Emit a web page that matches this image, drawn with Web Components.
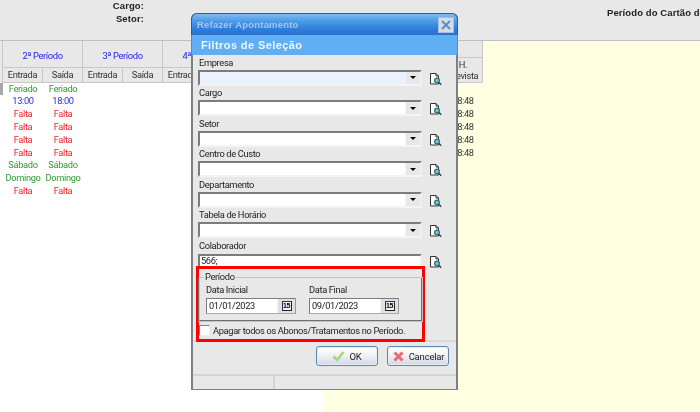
<!DOCTYPE html>
<html lang="pt-BR">
<head>
<meta charset="utf-8">
<title>Refazer Apontamento</title>
<style>
    html, body { margin: 0; height: 100%; overflow: hidden; }
    body { font: 9.3px Roboto, "Liberation Sans", Arial, sans-serif; letter-spacing: -.35px; color: #222; }
</style>
</head>
<body>
<ponto-page>
    <time-sheet></time-sheet>
    <filter-dialog slot="dialog" title-text="Refazer Apontamento" band="Filtros de Seleção">
        <filter-field label="Empresa" focused></filter-field>
        <filter-field label="Cargo"></filter-field>
        <filter-field label="Setor"></filter-field>
        <filter-field label="Centro de Custo"></filter-field>
        <filter-field label="Departamento"></filter-field>
        <filter-field label="Tabela de Horário"></filter-field>
        <filter-field label="Colaborador" value="566;" plain></filter-field>
        <period-box slot="period">
            <date-field label="Data Inicial" value="01/01/2023"></date-field>
            <date-field label="Data Final" value="09/01/2023"></date-field>
        </period-box>
        <dialog-button slot="actions" icon="ok">OK</dialog-button>
        <dialog-button slot="actions" icon="cancel">Cancelar</dialog-button>
    </filter-dialog>
</ponto-page>

<script>
    ((w, d) => {
        // Small base class: every element just stamps its markup in an open shadow root
        class ShadowElement extends HTMLElement {
            constructor() {
                super();
                this.attachShadow({mode: 'open'});
            }

            connectedCallback() {
                this.shadowRoot.innerHTML = this.render();
            }

            attr(name, fallback = '') {
                return this.hasAttribute(name) ? this.getAttribute(name) : fallback;
            }
        }

        // Page background: grey top band with the two info blocks, sheet below, dialog on top
        class PontoPage extends ShadowElement {
            render() {
                return `
                <style>
                    :host { display: block; position: relative; width: 700px; height: 412px; overflow: hidden; background: #e8e8e8; filter: blur(.3px); }
                    .top { height: 41px; display: flex; justify-content: space-between; font: bold 9.5px "Liberation Sans", Arial, sans-serif; letter-spacing: .1px; color: #222; box-sizing: border-box; border-bottom: 1px solid #c0c0c0; }
                    .who { width: 144px; display: grid; grid-auto-rows: 13px; text-align: right; align-content: start; }
                    .range { width: 93px; padding-top: 6px; line-height: 13px; white-space: nowrap; overflow: hidden; }
                </style>
                <div class="top">
                    <div class="who"><span>Cargo:</span><span>Setor:</span></div>
                    <div class="range">Período do Cartão de</div>
                </div>
                <slot></slot>
                <slot name="dialog"></slot>`;
            }
        }

        // The timesheet behind the dialog. The header is 480px of grey cells, the body white then yellow.
        class TimeSheet extends ShadowElement {
            render() {
                const rows = [
                    ['Feriado', 'g', ''], ['13:00', 'b', '08:48'], ['Falta', 'r', '08:48'],
                    ['Falta', 'r', '08:48'], ['Falta', 'r', '08:48'], ['Falta', 'r', '08:48'],
                    ['Sábado', 'g', ''], ['Domingo', 'g', ''], ['Falta', 'r', '']
                ];
                const groups = ['2ª Período', '3ª Período', '4ª Período', '5ª Período', '6ª Período'];

                const head = groups.map(g => `
                    <div class="group">
                        <div class="name">${g}</div>
                        <div class="subs"><span>Entrada</span><span>Saída</span></div>
                    </div>`).join('');

                const body = rows.map(([text, kind, prevista], i) => {
                    const end = text === '13:00' ? '18:00' : text;
                    return `
                    <div class="row">
                        <i class="${i === 0 ? 'mark' : ''}"></i>
                        <span class="${kind}">${text}</span>
                        <span class="${kind}">${end}</span>
                        <span class="prev">${prevista}</span>
                    </div>`;
                }).join('');

                return `
                <style>
                    :host { display: block; height: 371px; background: linear-gradient(90deg, #fff 323px, #ffffe2 323px); }
                    .head { display: flex; height: 41.6px; }
                    .lead { width: 3px; background: #e8e8e8; border-right: 1px solid #c8c8c8; box-sizing: border-box; }
                    .group { width: 80px; display: flex; flex-direction: column; background: #e8e8e8; border-right: 1px solid #c8c8c8; box-sizing: border-box; }
                    .name { height: 27px; line-height: 29px; text-align: center; color: #2323e6; border-bottom: 1px solid #c8c8c8; box-sizing: border-box; }
                    .subs { flex: 1; display: flex; border-bottom: 1px solid #c8c8c8; }
                    .subs span { flex: 1; text-align: center; line-height: 14px; color: #333; }
                    .subs span:first-child { border-right: 1px solid #c8c8c8; }
                    .hcol { width: 80px; display: flex; flex-direction: column; background: #e8e8e8; border-right: 1px solid #c8c8c8; box-sizing: border-box; }
                    .hcol .pad { height: 16px; border-bottom: 1px solid #c8c8c8; }
                    .hcol .lab { flex: 1; display: flex; justify-content: flex-end; border-bottom: 1px solid #c8c8c8; }
                    .hcol .lab span { width: 40px; text-align: center; line-height: 11px; padding-top: 1px; color: #333; margin-right: -1px; }
                    .fill { flex: 1; background: #ffffe2; border-top: 1px solid #c0c0c0; margin-top: -1px; }
                    .row { display: grid; grid-template-columns: 3px 40px 40px 360px 40px; height: 12.8px; line-height: 12.8px; text-align: center; }
                    .row i { display: block; }
                    .row i.mark { background: #a8a8a8; }
                    .row span:nth-of-type(3) { grid-column: 5; color: #333; }
                    .g { color: #2f9a35; }
                    .b { color: #2a2af0; }
                    .r { color: #f5222d; }
                </style>
                <div class="head">
                    <div class="lead"></div>
                    ${head}
                    <div class="hcol"><div class="pad"></div><div class="lab"><span>H.<br>Prevista</span></div></div>
                    <div class="fill"></div>
                </div>
                ${body}`;
            }
        }

        class FilterDialog extends ShadowElement {
            render() {
                return `
                <style>
                    :host { display: flex; flex-direction: column; position: absolute; left: 191px; top: 13px; width: 267px; height: 377px; box-sizing: border-box; background: #e8e8e8; border: 1px solid #7d8084; border-top: 0; border-left-width: 2px; border-right-width: 2px; border-radius: 6px 6px 0 0; }
                    .title { height: 22px; margin: 0 -2px; box-sizing: border-box; display: flex; align-items: center; justify-content: space-between; padding: 0 3px 0 5px; border: 1px solid #3a4fb4; border-bottom: 0; border-radius: 6px 6px 0 0; background: linear-gradient(#7fbcf0, #4a9ae6 35%, #2f7fdc 70%, #2a6fd0); color: #a4c6e8; font: bold 9.5px "Liberation Sans", Arial, sans-serif; letter-spacing: .2px; }
                    .close { width: 14px; height: 14px; background: #d4dde6; border: 1px solid #a9c0d8; display: flex; }
                    .band { height: 20px; margin: 0 -1px; padding-left: 9px; line-height: 20px; background: #60aff4; color: #eef6fe; font: bold 11px/20px "Liberation Sans", Arial, sans-serif; letter-spacing: .4px; }
                    .fields { display: flex; flex-direction: column; gap: 1.6px; padding: 1.5px 0 0 5px; }
                    ::slotted(period-box) { margin: -3px 0 0 3px; position: relative; z-index: 1; }
                    .foot { display: flex; justify-content: flex-end; gap: 9px; height: 33px; box-sizing: border-box; padding: 4px 7px 0 0; border-top: 2px solid #d8d8d8; margin-top: -2px; }
                    .status { margin-top: auto; height: 15px; display: flex; border-top: 2px solid #d4d4d4; box-sizing: border-box; }
                    .status i { display: block; width: 80px; border-right: 2px solid #d4d4d4; }
                </style>
                <div class="title">
                    <span>${this.attr('title-text')}</span>
                    <span class="close"><svg width="14" height="14" viewBox="0 0 14 14"><path d="M3 3l8 8M11 3l-8 8" stroke="#5a8fca" stroke-width="2" fill="none"/></svg></span>
                </div>
                <div class="band">${this.attr('band')}</div>
                <div class="fields"><slot></slot></div>
                <slot name="period"></slot>
                <div class="foot"><slot name="actions"></slot></div>
                <div class="status"><i></i></div>`;
            }
        }

        // Label, sunken combo (or plain edit) and the lookup icon
        class FilterField extends ShadowElement {
            render() {
                const plain = this.hasAttribute('plain');
                return `
                <style>
                    :host { display: block; }
                    label { display: block; height: 13px; line-height: 12px; padding-left: 1px; color: #222; }
                    .line { display: flex; gap: 7px; align-items: center; }
                    .box { width: 224px; height: ${plain ? 15 : 16}px; box-sizing: border-box; display: flex; justify-content: space-between; border: 2px solid; border-color: #7c7c7c #f0f0f0 #f4f4f4 #7c7c7c; background: ${this.hasAttribute('focused') ? '#eaf3fd' : '#fff'}; line-height: 9px; padding-left: 1px; color: #222; }
                    .arrow { width: 14px; background: #e8e8e8; display: flex; align-items: center; justify-content: center; border-left: 1px solid #f4f4f4; }
                    .arrow b { display: block; border: 3px solid transparent; border-top: 3px solid #000; border-bottom: 0; width: 0; }
                    svg { display: block; margin-top: 2px; }
                </style>
                <label>${this.attr('label')}</label>
                <div class="line">
                    <div class="box"><span>${this.attr('value')}</span>${plain ? '' : '<span class="arrow"><b></b></span>'}</div>
                    <svg width="13" height="14" viewBox="0 0 13 14">
                        <path d="M1.5 1.5h5.5l2.5 2.5v8h-8z" fill="#fff" stroke="#333"/>
                        <path d="M7 1.5v2.5h2.5" fill="none" stroke="#333"/>
                        <circle cx="8" cy="8.5" r="2.4" fill="#7cc4c8" stroke="#2f6f7c" stroke-width="1.2"/>
                        <path d="M9.8 10.3l2.4 2.4" stroke="#27505c" stroke-width="1.6"/>
                    </svg>
                </div>`;
            }
        }

        // Red highlight around the period group and the checkbox
        class PeriodBox extends ShadowElement {
            render() {
                return `
                <style>
                    :host { display: block; width: 229px; height: 76px; box-sizing: border-box; border: 3px solid #f00; color: #222; }
                    fieldset { margin: 3px 0 0 -1px; padding: 0 0 0 6px; width: 225px; height: 50px; box-sizing: border-box; border: 2px groove #c4c4c4; border-top-width: 1px; }
                    legend { padding: 0 1px; margin-left: -2px; line-height: 10px; }
                    .check { display: flex; align-items: center; gap: 3px; height: 16px; white-space: nowrap; }
                    .check i { display: block; flex: none; width: 9px; height: 9px; background: #fff; border: 1px solid; border-color: #808080 #eee #eee #808080; }
                    .dates { display: flex; gap: 13px; }
                </style>
                <fieldset><legend>Período</legend><div class="dates"><slot></slot></div></fieldset>
                <div class="check"><i></i><span>Apagar todos os Abonos/Tratamentos no Período.</span></div>`;
            }
        }

        class DateField extends ShadowElement {
            render() {
                return `
                <style>
                    :host { display: block; width: 90px; }
                    label { display: block; height: 13px; line-height: 13px; margin-top: 1px; }
                    .box { margin-top: 1.5px; height: 16px; box-sizing: border-box; display: flex; justify-content: space-between; border: 1px solid; border-color: #7c7c7c #999 #aaa #7c7c7c; background: #fff; line-height: 14px; padding-left: 2px; color: #222; }
                    .btn { width: 17px; background: #e0e0e0; border-left: 1px solid #f4f4f4; display: flex; align-items: center; justify-content: center; }
                    .cal { width: 10px; height: 10px; box-sizing: border-box; border: 1px solid #2a2a80; border-right-color: #222; border-bottom-color: #222; background: #eef1f8; font: bold 7px/8px "Liberation Sans", sans-serif; letter-spacing: -.4px; color: #000; text-align: center; overflow: hidden; }
                </style>
                <label>${this.attr('label')}</label>
                <div class="box"><span>${this.attr('value')}</span><span class="btn"><span class="cal">15</span></span></div>`;
            }
        }

        class DialogButton extends ShadowElement {
            render() {
                const icons = {
                    ok: '<path d="M1.5 6.5l3.5 3.5 6.5-8" stroke="#a4d878" stroke-width="2.6" fill="none"/>',
                    cancel: '<path d="M2.5 2.5l8 8M10.5 2.5l-8 8" stroke="#ef6a70" stroke-width="3" fill="none"/>'
                };
                return `
                <style>
                    :host { display: block; }
                    button { display: flex; align-items: center; justify-content: center; gap: 4px; width: 62px; height: 20px; padding: 0; box-sizing: border-box; border: 1px solid #5b87ad; border-radius: 3px; background: linear-gradient(#fff, #f2f2f6 45%, #d4d6e6); font: 9.5px Roboto, "Liberation Sans", Arial, sans-serif; letter-spacing: -.2px; color: #222; box-shadow: inset 0 0 0 1px #e8eff7; }
                </style>
                <button type="button"><svg width="13" height="12" viewBox="0 0 13 12">${icons[this.attr('icon')]}</svg><slot></slot></button>`;
            }
        }

        customElements.define('ponto-page', PontoPage);
        customElements.define('time-sheet', TimeSheet);
        customElements.define('filter-dialog', FilterDialog);
        customElements.define('filter-field', FilterField);
        customElements.define('period-box', PeriodBox);
        customElements.define('date-field', DateField);
        customElements.define('dialog-button', DialogButton);
    })(window, document);
</script>
</body>
</html>
